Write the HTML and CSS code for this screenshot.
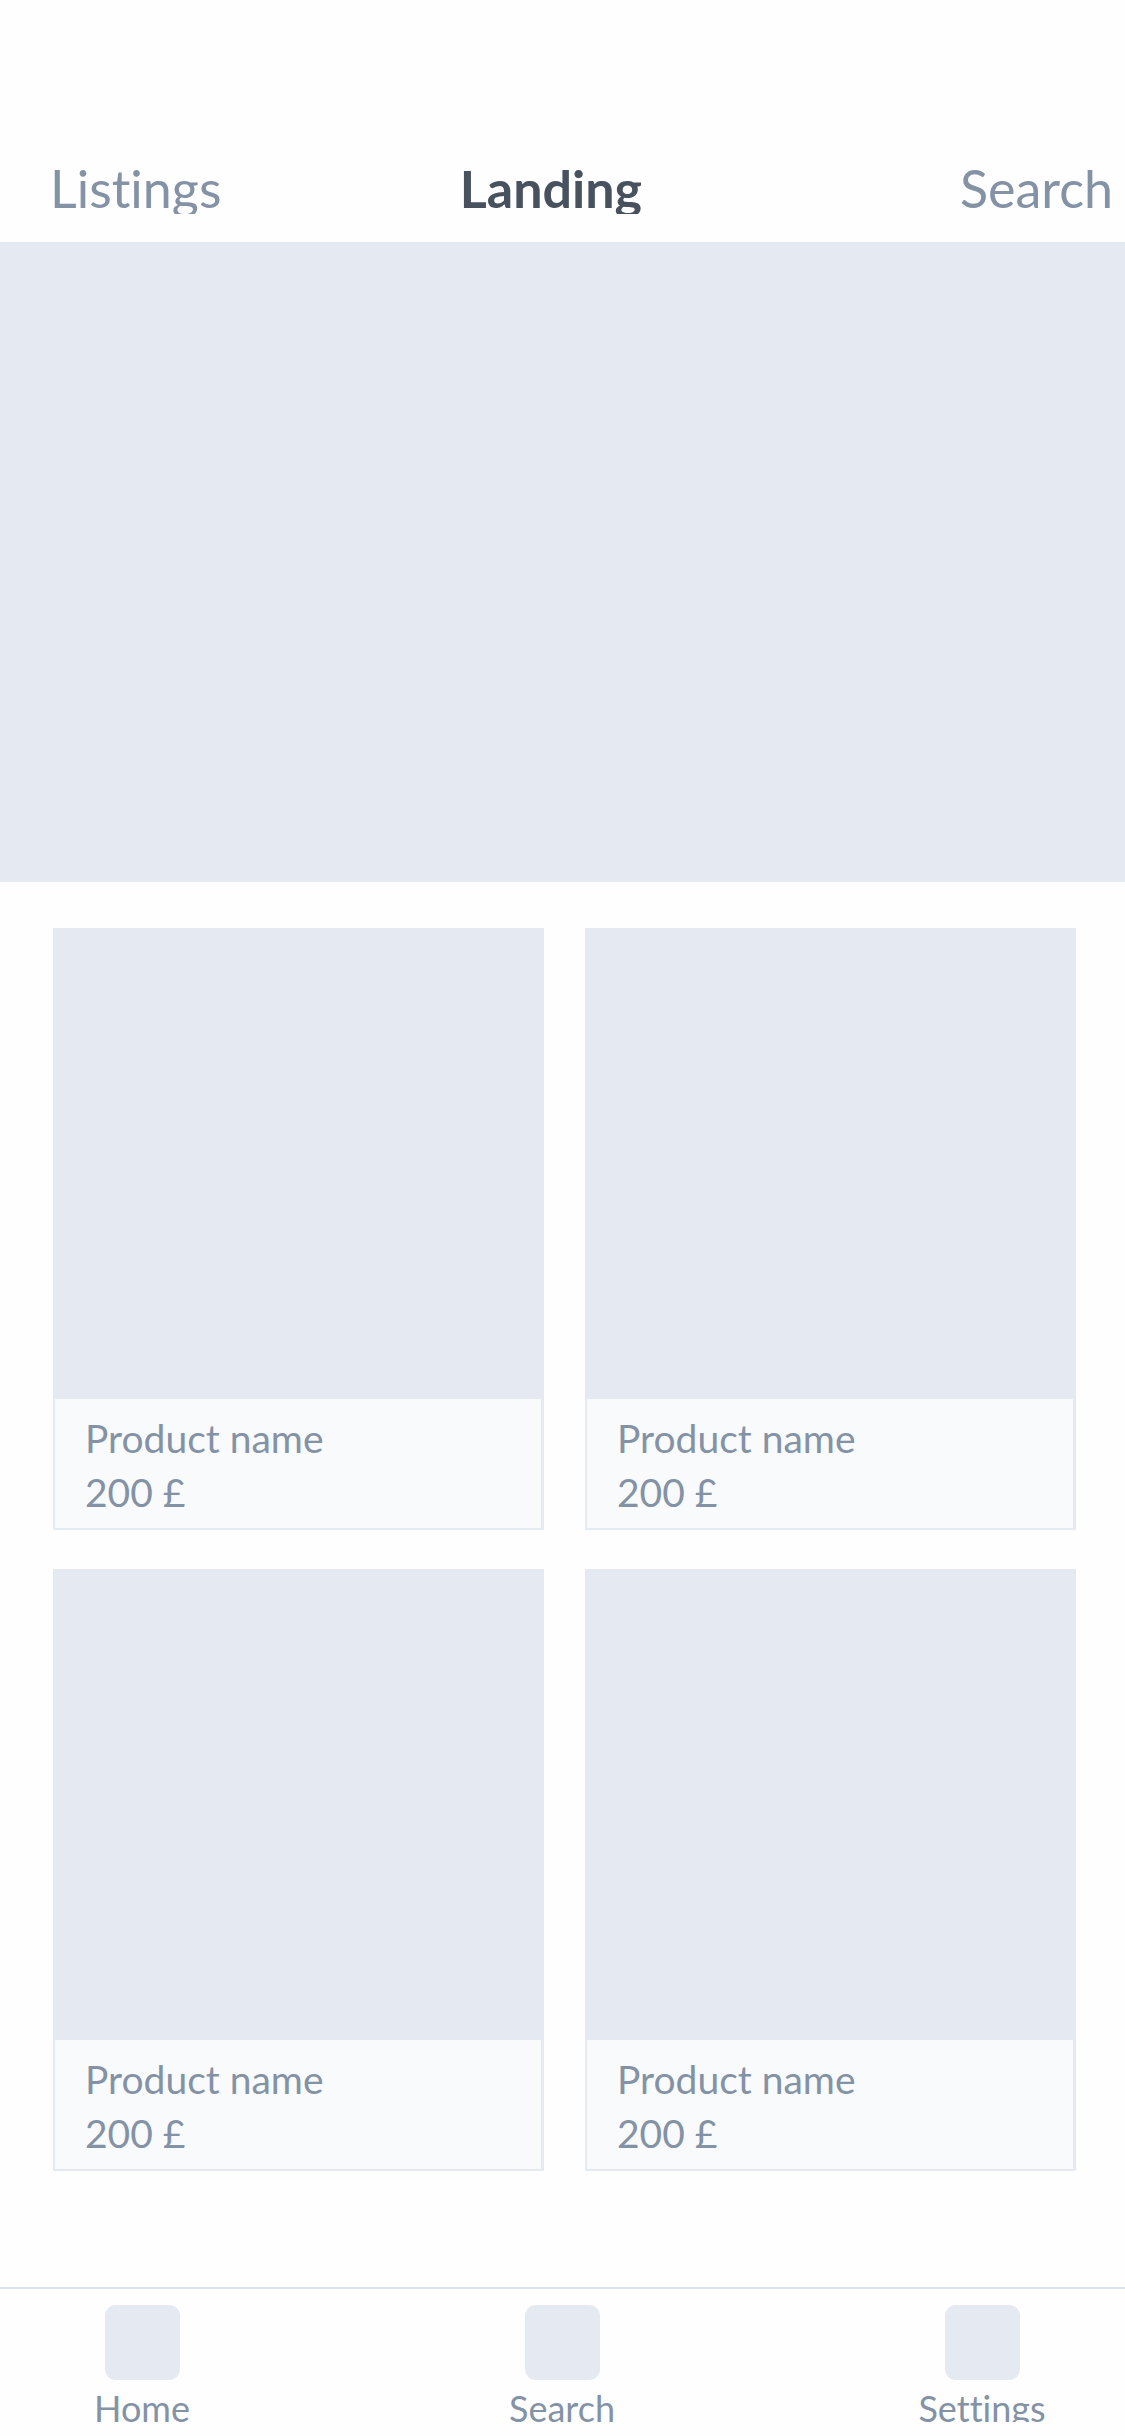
FILE: index.html
```html
<!DOCTYPE html>
<html lang="en">
<head>
<meta charset="utf-8">
<meta name="viewport" content="width=device-width, initial-scale=1">
<title>Landing</title>
<link rel="stylesheet" href="styles.css">
</head>
<body>
<header class="tabs">
  <a class="tab tab-first" href="#listings">Listings</a>
  <a class="tab tab-current" href="#landing" aria-current="page">Landing</a>
  <a class="tab" href="#search">Search</a>
</header>
<main>
  <div class="hero"></div>
  <section class="products">
    <a class="card" href="#product-1">
      <div class="card-image"></div>
      <div class="card-text"><div>Product name</div><div>200 £</div></div>
    </a>
    <a class="card" href="#product-2">
      <div class="card-image"></div>
      <div class="card-text"><div>Product name</div><div>200 £</div></div>
    </a>
    <a class="card" href="#product-3">
      <div class="card-image"></div>
      <div class="card-text"><div>Product name</div><div>200 £</div></div>
    </a>
    <a class="card" href="#product-4">
      <div class="card-image"></div>
      <div class="card-text"><div>Product name</div><div>200 £</div></div>
    </a>
  </section>
</main>
<nav class="bottom-nav">
  <a class="nav-item" href="#home"><span class="nav-icon"></span><span class="nav-label">Home</span></a>
  <a class="nav-item" href="#search"><span class="nav-icon"></span><span class="nav-label">Search</span></a>
  <a class="nav-item" href="#settings"><span class="nav-icon"></span><span class="nav-label">Settings</span></a>
</nav>
</body>
</html>
```
FILE: styles.css
```css
* {
  box-sizing: border-box;
}

body {
  display: flex;
  flex-direction: column;
  min-height: 100vh;
  margin: 0;
  background: #fefefe;
  color: #8492a6;
  font-family: Lato, sans-serif;
  font-variant-ligatures: none;
}

a {
  color: inherit;
  text-decoration: none;
}

.tabs {
  display: flex;
  padding: 162px 12px 28px 50px;
}

.tab {
  overflow: hidden;
  font-size: 52px;
  line-height: 52px;
}

.tab-first {
  flex: 3 0 auto;
}

.tab-current {
  flex: 4 0 auto;
  color: #47525e;
  font-weight: 700;
}

.hero {
  aspect-ratio: 1125 / 640;
  background: #e5e9f2;
}

.products {
  display: grid;
  grid-template-columns: 1fr 1fr;
  gap: 39px 41px;
  padding: 46px 49px 40px 53px;
}

.card {
  display: block;
  border: 2px solid #e5e9f2;
  border-right-width: 3px;
  border-radius: 1px;
  background: #f9fafc;
}

.card-image {
  aspect-ratio: 486 / 469;
  background: #e5e9f2;
}

.card-text {
  padding: 12px 30px 9px;
  font-size: 39px;
  line-height: 54px;
}

.bottom-nav {
  display: flex;
  justify-content: space-between;
  margin-top: auto;
  padding: 16px 68px 14px 67px;
  border-top: 2px solid #dbe1ec;
}

.nav-item {
  display: flex;
  flex-direction: column;
  align-items: center;
  gap: 14px;
  width: 150px;
}

.nav-icon {
  width: 75px;
  height: 75px;
  border-radius: 11px;
  background: #e5e9f2;
}

.nav-label {
  overflow: hidden;
  font-size: 36px;
  line-height: 28px;
}
```
